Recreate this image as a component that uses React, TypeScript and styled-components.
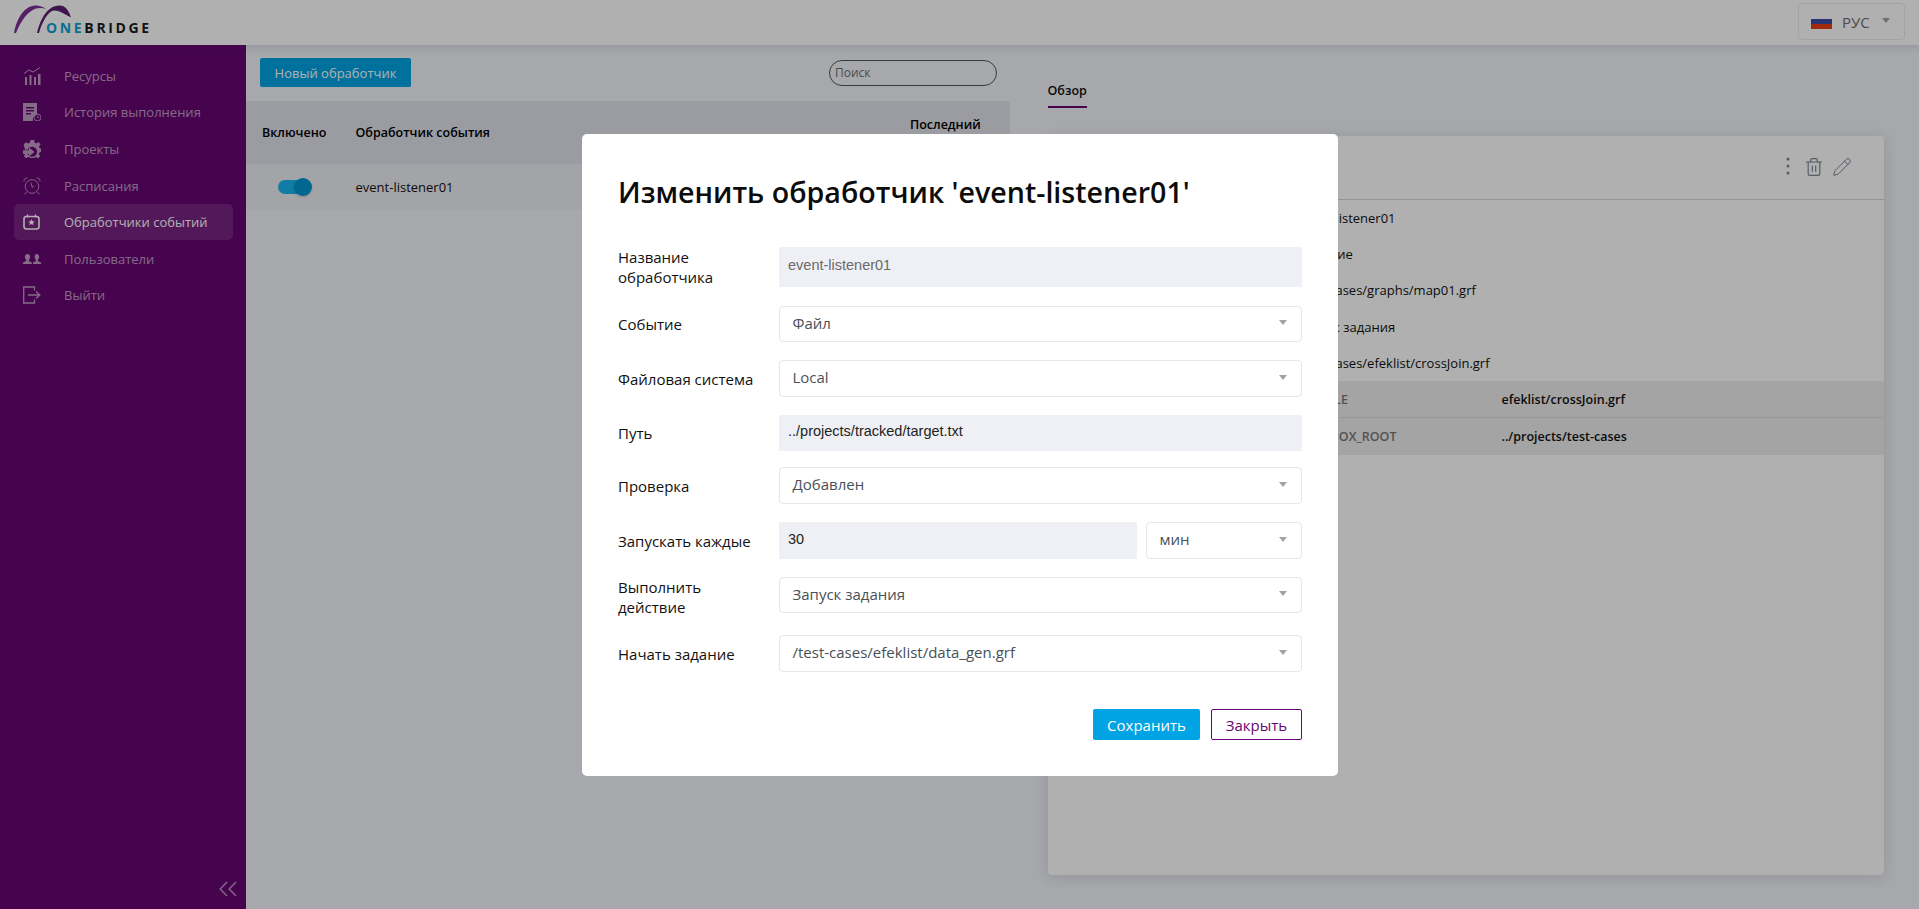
import React from "react";
import styled, { createGlobalStyle } from "styled-components";
import { Pencil, Trash2 } from "lucide-react";

const GlobalStyle = createGlobalStyle`
  html, body {
    margin: 0;
    padding: 0;
    height: 100%;
    overflow: hidden;
    background: #f1f3f8;
    font-family: "Open Sans", "Noto Sans", sans-serif;
    font-size: 14px;
    color: #111;
  }
  * { box-sizing: border-box; }
`;

const Page = styled.div`
  width: 1919px;
  height: 909px;
  display: flex;
  flex-direction: column;
`;

/* header */
const Header = styled.header`
  height: 45px;
  flex: none;
  background: #fff;
  display: flex;
  align-items: flex-start;
  justify-content: space-between;
  padding: 3px 14px 0 13px;
  box-shadow: 0 2px 8px rgba(40, 45, 70, 0.14);
  position: relative;
  z-index: 2;
`;

const Logo = styled.div`
  position: relative;
  width: 140px;
  height: 38px;
`;

const LogoMark = styled.svg`
  position: absolute;
  left: 0;
  top: 0;
`;

const LogoText = styled.div`
  position: absolute;
  left: 33px;
  top: 15px;
  font-size: 14px;
  line-height: 20px;
  font-weight: 700;
  letter-spacing: 2.65px;
  white-space: nowrap;
  color: #1c1c1c;
  span {
    color: #0f9fd6;
  }
`;

const LangSelect = styled.div`
  width: 107px;
  height: 37px;
  border: 1px solid #ececec;
  border-radius: 4px;
  display: flex;
  align-items: center;
  padding: 0 0 0 12px;
  color: #6e6e6e;
  font-size: 15px;
  position: relative;
`;

const Flag = styled.div`
  width: 21px;
  height: 15px;
  margin-right: 10px;
  background: linear-gradient(#fff 0 33.3%, #3b4fa8 33.3% 66.6%, #e83e10 66.6%);
`;

const Caret = styled.i`
  position: absolute;
  right: ${(p: { $right: number }) => p.$right}px;
  top: 50%;
  margin-top: -4px;
  width: 0;
  height: 0;
  border-left: 4px solid transparent;
  border-right: 4px solid transparent;
  border-top: 5px solid #a3a3a3;
`;

/* sidebar */
const Body = styled.div`
  flex: 1;
  display: flex;
  min-height: 0;
`;

const Sidebar = styled.nav`
  width: 246px;
  flex: none;
  background: #670672;
  padding: 12.5px 13px 0 14px;
  position: relative;
`;

const NavItem = styled.div<{ $active?: boolean }>`
  height: 36.6px;
  display: flex;
  align-items: center;
  padding-left: 9px;
  border-radius: 5px;
  font-size: 13px;
  font-weight: ${(p) => (p.$active ? 500 : 400)};
  color: ${(p) => (p.$active ? "#fff" : "rgba(255,255,255,0.6)")};
  background: ${(p) => (p.$active ? "rgba(255,255,255,0.12)" : "transparent")};
  svg {
    flex: none;
    margin-right: 23px;
  }
`;

const Collapse = styled.svg`
  position: absolute;
  right: 9px;
  bottom: 12px;
`;

/* list */
const ListPanel = styled.section`
  width: 764px;
  flex: none;
`;

const Toolbar = styled.div`
  height: 56px;
  display: flex;
  justify-content: space-between;
  align-items: flex-start;
  padding: 13px 13px 0 14px;
`;

const PrimaryButton = styled.button<{ $w: number; $h: number; $size: number }>`
  width: ${(p) => p.$w}px;
  height: ${(p) => p.$h}px;
  border: 0;
  border-radius: 2px;
  background: #00a4e4;
  color: #fff;
  font: 500 ${(p) => p.$size}px "Open Sans", sans-serif;
  padding: 0;
`;

const Search = styled.div`
  width: 168px;
  height: 26px;
  margin-top: 2px;
  border: 1px solid #555;
  border-radius: 13px;
  padding-left: 5px;
  font: 12px/23px "Open Sans", sans-serif;
  color: #6f6f6f;
  background: #f1f3f8;
`;

const HeadRow = styled.div`
  height: 63px;
  display: flex;
  align-items: center;
  background: #dfe2ea;
  font-weight: 600;
  font-size: 12.5px;
  color: #000;
`;

const Row = styled.div`
  height: 46px;
  display: flex;
  align-items: center;
  background: #edeef3;
  font-size: 13px;
`;

const EnabledCell = styled.div`
  width: 109.5px;
  padding-left: 16px;
  flex: none;
  display: flex;
`;

const NameCell = styled.div`
  flex: 1;
`;

const LastCell = styled.div`
  width: 100px;
  flex: none;
  line-height: 20px;
  padding-top: 5px;
`;

const Toggle = styled.div`
  width: 34px;
  height: 18px;
  margin-left: 16px;
  position: relative;
  &::before {
    content: "";
    position: absolute;
    left: 0;
    top: 2px;
    width: 30px;
    height: 14px;
    border-radius: 7px;
    background: #19b5ee;
  }
  &::after {
    content: "";
    position: absolute;
    right: 0;
    top: 0;
    width: 18px;
    height: 18px;
    border-radius: 50%;
    background: #0096d2;
    box-shadow: 0 1px 2px rgba(0, 0, 0, 0.2);
  }
`;

/* details */
const DetailPanel = styled.section`
  flex: 1;
  padding: 0 35px 34px 37.5px;
  display: flex;
  flex-direction: column;
`;

const Tabs = styled.div`
  height: 91px;
  flex: none;
  padding-top: 36px;
  font-weight: 600;
  font-size: 12.5px;
`;

const Tab = styled.span`
  display: inline-block;
  height: 27px;
  line-height: 19px;
  border-bottom: 2px solid #670672;
`;

const Card = styled.div`
  flex: 1;
  background: #fff;
  border-radius: 4px;
  box-shadow: 0 2px 14px rgba(40, 45, 70, 0.14);
`;

const CardHead = styled.div`
  height: 64px;
  border-bottom: 1px solid #d6d6d6;
  display: flex;
  justify-content: flex-end;
  align-items: flex-start;
  padding: 21px 32px 0 0;
  color: #7d8398;
`;

const Dots = styled.svg`
  margin-right: 14px;
`;

const TrashIcon = styled(Trash2)`
  margin-right: 8px;
`;

const InfoRow = styled.div`
  height: 36.2px;
  display: flex;
  align-items: center;
  font-size: 13px;
  padding-left: 250px;
`;

const ParamRow = styled.div`
  height: 37px;
  display: flex;
  align-items: center;
  font-size: 12.5px;
  background: #eee;
  border-bottom: 1px solid #ddd;
  padding: 1px 0 0 249px;
  font-weight: 600;
  &:last-child {
    border-bottom: 0;
  }
`;

const ParamName = styled.div`
  width: 205px;
  color: #777;
  font-weight: 600;
`;

/* modal */
const Backdrop = styled.div`
  position: fixed;
  inset: 0;
  z-index: 10;
  background: rgba(0, 0, 0, 0.31);
  display: flex;
  justify-content: center;
  align-items: flex-start;
  padding: 134px 0 0 1px;
`;

const Modal = styled.div`
  width: 756px;
  height: 642px;
  background: #fff;
  border-radius: 5px;
  padding: 34px 36px 0 36px;
`;

const Title = styled.h2`
  margin: 0 0 31px;
  font-size: 28.6px;
  line-height: 48px;
  font-weight: 600;
  color: #0c0c0c;
  white-space: nowrap;
`;

const FormRow = styled.div<{ $gap: number }>`
  display: flex;
  align-items: flex-start;
  margin-bottom: ${(p) => p.$gap}px;
`;

const Label = styled.label`
  width: 161px;
  flex: none;
  font-size: 15px;
  line-height: 20px;
  align-self: center;
  color: #111;
`;

const TextField = styled.div<{ $h: number; $dim?: boolean }>`
  flex: 1;
  height: ${(p) => p.$h}px;
  background: #eff0f5;
  padding-left: 9px;
  font: 14.5px/${(p) => p.$h - 3}px "Liberation Sans", Arial, sans-serif;
  color: ${(p) => (p.$dim ? "#6a6a6a" : "#222")};
`;

const SelectField = styled.div<{ $h: number; $w?: number }>`
  flex: ${(p) => (p.$w ? "none" : "1")};
  width: ${(p) => (p.$w ? `${p.$w}px` : "auto")};
  margin-left: ${(p) => (p.$w ? "9px" : "0")};
  height: ${(p) => p.$h}px;
  border: 1px solid #e4e6ea;
  border-radius: 4px;
  padding-left: 12.5px;
  font-size: 15px;
  line-height: ${(p) => p.$h - 4}px;
  color: #495057;
  position: relative;
`;

const Actions = styled.div`
  display: flex;
  justify-content: flex-end;
  gap: 11px;
  margin-top: 37px;
`;

const CloseButton = styled.button`
  width: 91px;
  height: 31px;
  border: 1px solid #670672;
  border-radius: 2px;
  background: #fff;
  color: #670672;
  font: 15px "Open Sans", sans-serif;
  padding: 0;
`;

const navItems = [
  {
    label: "Ресурсы",
    icon: (
      <>
        <path d="M1 6.500 6 3l4 2 7-4.500" fill="none" stroke="currentColor" strokeWidth="1" />
        <path d="M2 10h2v8H2zM6.500 8h2v10h-2zM11 10h2v8h-2zM15 7h2.500v11H15z" fill="currentColor" />
      </>
    ),
  },
  {
    label: "История выполнения",
    icon: (
      <>
        <path
          d="M0 0h14v11a6 6 0 0 0-4 7H0zM3 4v1.400h8V4zM3 7v1.400h8V7zM3 10v1.400h5V10z"
          fill="currentColor"
          fillRule="evenodd"
        />
        <circle cx="14.500" cy="14.500" r="3.400" fill="none" stroke="currentColor" strokeWidth="0.900" />
        <path d="M14.500 12.600v2h1.600" fill="none" stroke="currentColor" strokeWidth="0.800" />
      </>
    ),
  },
  {
    label: "Проекты",
    icon: (
      <path
        d="M7.500 0h3.600l.5 2.600 1.700.8 2.300-1.300 2 2.400-1.600 2 .7 1.700 1.800.5v3.200l-2 .6-.6 1.700 1.300 2.100-2.400 2.200-2-1.500-1.700.7-.5 2.200H7.400l-.5-2.300-1.700-.7-2.100 1.400L.8 15.900l1.400-2H0v-3.600h6V7.400l5.500 4.600L6 16.500v-2.700H4.500a5 5 0 1 0 0-4H2.100l-.1-.2L.6 4.600 3 2.300l2.100 1.200 1.700-.7z"
        fill="currentColor"
        fillRule="evenodd"
      />
    ),
  },
  {
    label: "Расписания",
    icon: (
      <g fill="none" stroke="currentColor" strokeWidth="0.900">
        <circle cx="9" cy="9.500" r="6.800" />
        <path d="M8 5.500l1.200 5 2-1.500M1 4.500A3 3 0 0 1 4.500 1M17 4.500A3 3 0 0 0 13.500 1M3.500 15l-2 2.500M14.500 15l2 2.500" />
      </g>
    ),
  },
  {
    label: "Обработчики событий",
    active: true,
    icon: (
      <>
        <rect x="1" y="3.500" width="15" height="12.500" rx="2.500" fill="none" stroke="currentColor" strokeWidth="1.600" />
        <path d="M4.500 1.500v3M12.500 1.500v3" stroke="currentColor" strokeWidth="1.400" />
        <path d="M8.500 6l1 2.200 2.300.2-1.800 1.500.6 2.300-2.100-1.200-2.100 1.200.6-2.300-1.800-1.500 2.300-.2z" fill="currentColor" />
      </>
    ),
  },
  {
    label: "Пользователи",
    icon: (
      <path
        d="M4.500 4a2.600 2.600 0 0 1 2.600 3c0 1.500-.7 2.600-1.300 3.100v1l3 1.500V14H0v-1.400l3.200-1.500v-1C2.600 9.600 1.900 8.500 1.900 7a2.600 2.600 0 0 1 2.600-3zM13.500 4a2.600 2.600 0 0 1 2.600 3c0 1.500-.7 2.600-1.300 3.100v1l3.200 1.500V14h-8v-1.400l3-1.500v-1c-.6-.5-1.300-1.600-1.300-3.100a2.600 2.600 0 0 1 1.800-3z"
        fill="currentColor"
      />
    ),
  },
  {
    label: "Выйти",
    icon: (
      <g fill="none" stroke="currentColor" strokeWidth="1.300">
        <path d="M11.500 4.500V1H.7v16h10.800v-3.500" />
        <path d="M5 9h11.500M13 5.500 16.800 9 13 12.500" />
      </g>
    ),
  },
];

const infoRows = [
  "event-listener01",
  "Событие",
  "/test-cases/graphs/map01.grf",
  "Запуск задания",
  "/test-cases/efeklist/crossJoin.grf",
];

export default function App() {
  return (
    <Page>
      <GlobalStyle />
      <Header>
        <Logo>
          <LogoMark width="80" height="36" viewBox="0 0 80 36">
            <path d="M1 30C4 14 12 3 22 2.500c4-.2 8 1 11 3.500-3-1.300-7-1.400-10-.4C15 8 8 18 3 30z" fill="#7d2f95" />
            <path
              d="M24 30C28 14 35 3 46 2.500c5-.2 9 2.500 12 12-4-2.500-9-5-13-6.500-3-.9-5-.7-6.500.3C33 12 29 20 26 30z"
              fill="#5b2170"
            />
          </LogoMark>
          <LogoText>
            <span>ONE</span>BRIDGE
          </LogoText>
        </Logo>
        <LangSelect>
          <Flag />
          РУС
          <Caret $right={14} />
        </LangSelect>
      </Header>
      <Body>
        <Sidebar>
          {navItems.map((item) => (
            <NavItem key={item.label} $active={item.active}>
              <svg width="18" height="18" viewBox="0 0 18 18">
                {item.icon}
              </svg>
              {item.label}
            </NavItem>
          ))}
          <Collapse width="18" height="16" viewBox="0 0 18 16" fill="none" stroke="rgba(255,255,255,0.55)" strokeWidth="1.600">
            <path d="M8 1 1.200 8 8 15M17 1l-6.800 7 6.800 7" />
          </Collapse>
        </Sidebar>
        <ListPanel>
          <Toolbar>
            <PrimaryButton $w={151} $h={29} $size={13}>Новый обработчик</PrimaryButton>
            <Search>Поиск</Search>
          </Toolbar>
          <HeadRow>
            <EnabledCell>Включено</EnabledCell>
            <NameCell>Обработчик события</NameCell>
            <LastCell>
              Последний
              <br />
              запуск
            </LastCell>
          </HeadRow>
          <Row>
            <EnabledCell>
              <Toggle />
            </EnabledCell>
            <NameCell>event-listener01</NameCell>
            <LastCell />
          </Row>
        </ListPanel>
        <DetailPanel>
          <Tabs>
            <Tab>Обзор</Tab>
          </Tabs>
          <Card>
            <CardHead>
              <Dots width="4" height="18" viewBox="0 0 4 18" fill="currentColor">
                <circle cx="2" cy="2" r="1.500" />
                <circle cx="2" cy="9" r="1.500" />
                <circle cx="2" cy="16" r="1.500" />
              </Dots>
              <TrashIcon size={20} strokeWidth={1.400} />
              <Pencil size={20} strokeWidth={1.200} />
            </CardHead>
            {infoRows.map((value) => (
              <InfoRow key={value}>{value}</InfoRow>
            ))}
            <ParamRow>
              <ParamName>JOB_FILE</ParamName>
              efeklist/crossJoin.grf
            </ParamRow>
            <ParamRow>
              <ParamName>SANDBOX_ROOT</ParamName>
              ../projects/test-cases
            </ParamRow>
          </Card>
        </DetailPanel>
      </Body>
      <Backdrop>
        <Modal>
          <Title>Изменить обработчик 'event-listener01'</Title>
          <FormRow $gap={19}>
            <Label>
              Название
              <br />
              обработчика
            </Label>
            <TextField $h={40} $dim>event-listener01</TextField>
          </FormRow>
          <FormRow $gap={18}>
            <Label>Событие</Label>
            <SelectField $h={36}>
              Файл
              <Caret $right={14} />
            </SelectField>
          </FormRow>
          <FormRow $gap={18}>
            <Label>Файловая система</Label>
            <SelectField $h={37}>
              Local
              <Caret $right={14} />
            </SelectField>
          </FormRow>
          <FormRow $gap={16}>
            <Label>Путь</Label>
            <TextField $h={36}>../projects/tracked/target.txt</TextField>
          </FormRow>
          <FormRow $gap={18}>
            <Label>Проверка</Label>
            <SelectField $h={37}>
              Добавлен
              <Caret $right={14} />
            </SelectField>
          </FormRow>
          <FormRow $gap={18}>
            <Label>Запускать каждые</Label>
            <TextField $h={37}>30</TextField>
            <SelectField $h={37} $w={156}>
              мин
              <Caret $right={14} />
            </SelectField>
          </FormRow>
          <FormRow $gap={18}>
            <Label>
              Выполнить
              <br />
              действие
            </Label>
            <SelectField $h={36}>
              Запуск задания
              <Caret $right={14} />
            </SelectField>
          </FormRow>
          <FormRow $gap={0}>
            <Label>Начать задание</Label>
            <SelectField $h={37}>
              /test-cases/efeklist/data_gen.grf
              <Caret $right={14} />
            </SelectField>
          </FormRow>
          <Actions>
            <PrimaryButton $w={107} $h={31} $size={15}>Сохранить</PrimaryButton>
            <CloseButton>Закрыть</CloseButton>
          </Actions>
        </Modal>
      </Backdrop>
    </Page>
  );
}
